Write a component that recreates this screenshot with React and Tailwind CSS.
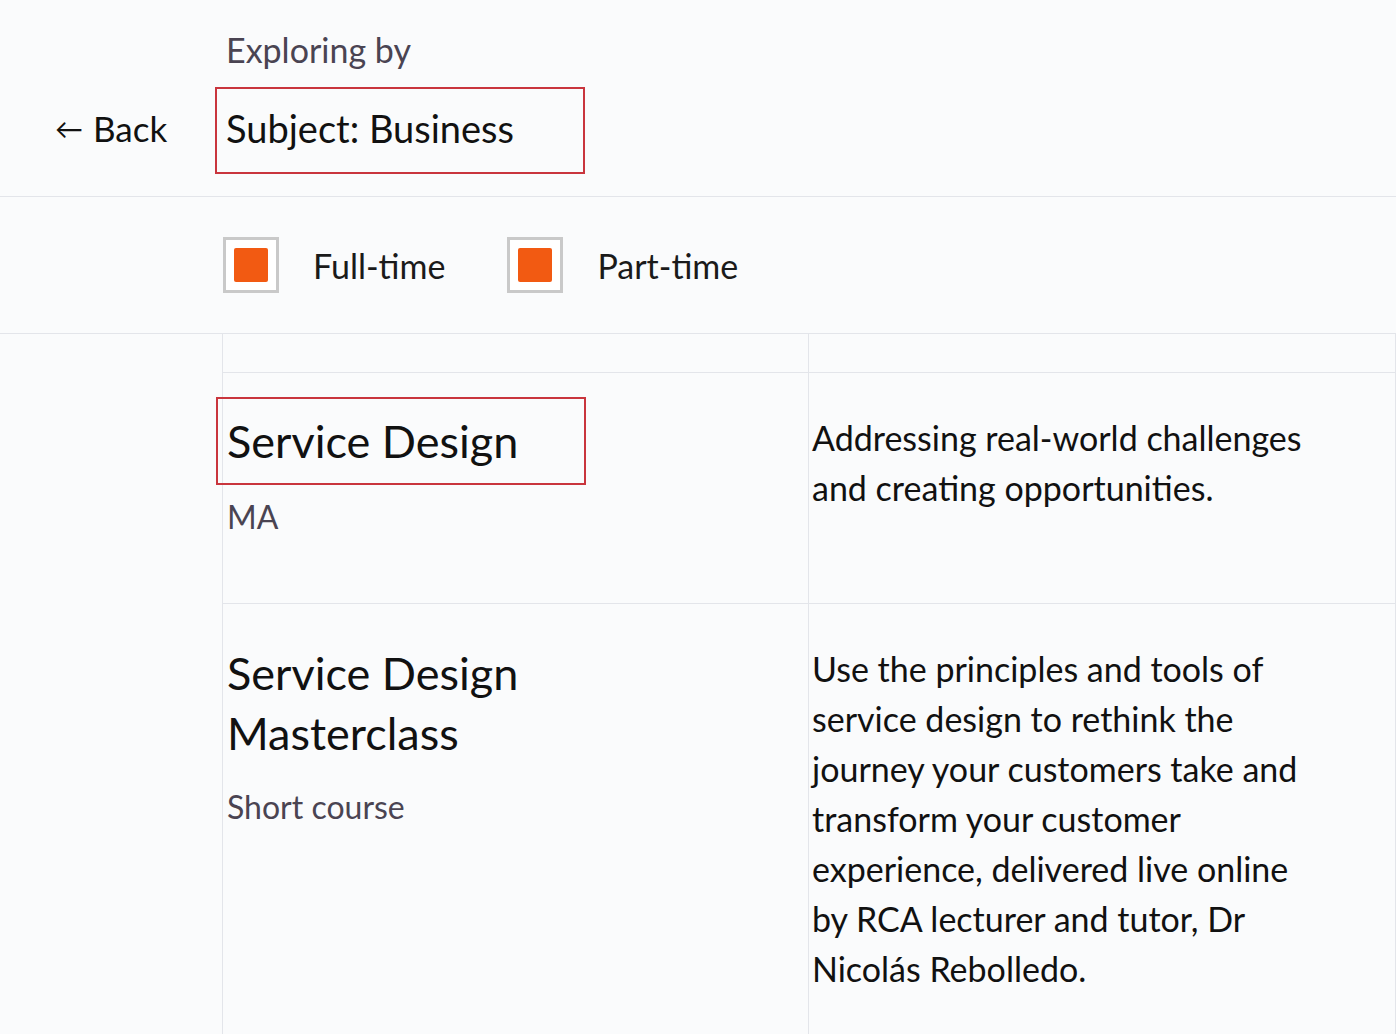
const courses = [
  {
    id: 1,
    title: ["Service Design"],
    level: "MA",
    highlight: true,
    text: ["Addressing real-world challenges", "and creating opportunities."]
  },
  {
    id: 2,
    title: ["Service Design", "Masterclass"],
    level: "Short course",
    highlight: false,
    text: [
      "Use the principles and tools of",
      "service design to rethink the",
      "journey your customers take and",
      "transform your customer",
      "experience, delivered live online",
      "by RCA lecturer and tutor, Dr",
      "Nicolás Rebolledo."
    ]
  }
];

function Checkbox({ label }) {
  return (
    <label className="flex items-center gap-[34px] cursor-pointer">
      <span className="flex items-center justify-center w-[56px] h-[56px] border-[3px] border-[#c9c9c9] bg-white">
        <span className="block w-[34px] h-[34px] rounded-[2px] bg-[#f25a12]" />
      </span>
      <span className="text-[34px] text-[#1a1a1a]">{label}</span>
    </label>
  );
}

function CourseRow({ course, last }) {
  return (
    <div className={"flex " + (last ? "flex-1" : "h-[231px] border-b border-[#e3e5ea]")}>
      <div className="w-[586px] shrink-0 border-r border-[#e3e5ea] pl-[4px] pt-[24px]">
        {course.highlight ? (
          <div className="-ml-[11px] w-[370px] h-[88px] border-2 border-[#c9353d] pl-[9px] flex items-center">
            <h3 className="text-[45px] leading-[60px] text-[#111]">{course.title[0]}</h3>
          </div>
        ) : (
          <h3 className="text-[45px] leading-[60px] text-[#111] pt-[15px]">
            {course.title.map((t) => (
              <span key={t} className="block">{t}</span>
            ))}
          </h3>
        )}
        <p className={"text-[32px] leading-[48px] text-[#4a4452] " + (course.highlight ? "mt-[8px]" : "mt-[20px]")}>
          {course.level}
        </p>
      </div>
      <div className={"flex-1 pl-[3px] " + (course.highlight ? "pt-[40px]" : "pt-[40px]")}>
        <p className="text-[34px] leading-[50px] text-[#111]">
          {course.text.map((t) => (
            <span key={t} className="block">{t}</span>
          ))}
        </p>
      </div>
    </div>
  );
}

export default function App() {
  return (
    <div className="h-[1034px] w-[1396px] bg-[#fafbfc] font-['Lato',sans-serif] overflow-hidden flex flex-col">
      {/* Header */}
      <div className="flex border-b border-[#e3e5ea] h-[197px] shrink-0">
        <div className="w-[222px] shrink-0 pl-[55px] pt-[104px]">
          <button className="text-[35px] text-[#111] leading-[48px] flex items-center gap-[10px]">
            <span className="text-[28px]">←</span>
            <span>Back</span>
          </button>
        </div>
        <div className="pl-[4px] pt-[26px]">
          <p className="text-[34px] leading-[48px] text-[#4a4452]">Exploring by</p>
          <div className="-ml-[11px] mt-[13px] w-[370px] h-[87px] border-2 border-[#c9353d] pl-[9px] flex items-center">
            <h2 className="text-[38px] text-[#111] -mt-[4px]">Subject: Business</h2>
          </div>
        </div>
      </div>

      {/* Filters */}
      <div className="flex border-b border-[#e3e5ea] h-[137px] items-center shrink-0">
        <div className="w-[223px] shrink-0" />
        <div className="flex items-center gap-[62px]">
          <Checkbox label="Full-time" />
          <Checkbox label="Part-time" />
        </div>
      </div>

      {/* Results */}
      <div className="flex flex-1">
        <div className="w-[222px] shrink-0" />
        <div className="flex-1 flex flex-col border-l border-r border-[#e3e5ea]">
          <div className="flex h-[39px] border-b border-[#e3e5ea] shrink-0">
            <div className="w-[586px] shrink-0 border-r border-[#e3e5ea]" />
            <div className="flex-1" />
          </div>
          {courses.map((c, i) => (
            <CourseRow key={c.id} course={c} last={i === courses.length - 1} />
          ))}
        </div>
      </div>
    </div>
  );
}
